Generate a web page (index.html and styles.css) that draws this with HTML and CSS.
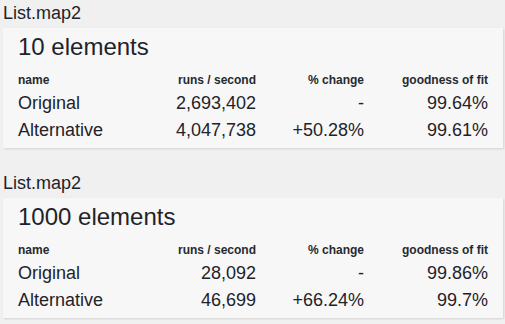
FILE: index.html
```html
<!DOCTYPE html>
<html>
<head>
<meta charset="utf-8">
<link rel="stylesheet" href="styles.css">
</head>
<body>
<section class="bench">
  <h2 class="suite">List.map2</h2>
  <div class="card">
    <h3 class="title">10 elements</h3>
    <div class="table">
      <div class="th left">name</div>
      <div class="th">runs / second</div>
      <div class="th">% change</div>
      <div class="th">goodness of fit</div>
      <div class="td left">Original</div>
      <div class="td">2,693,402</div>
      <div class="td">-</div>
      <div class="td">99.64%</div>
      <div class="td left">Alternative</div>
      <div class="td">4,047,738</div>
      <div class="td">+50.28%</div>
      <div class="td">99.61%</div>
    </div>
  </div>
</section>
<section class="bench">
  <h2 class="suite">List.map2</h2>
  <div class="card">
    <h3 class="title">1000 elements</h3>
    <div class="table">
      <div class="th left">name</div>
      <div class="th">runs / second</div>
      <div class="th">% change</div>
      <div class="th">goodness of fit</div>
      <div class="td left">Original</div>
      <div class="td">28,092</div>
      <div class="td">-</div>
      <div class="td">99.86%</div>
      <div class="td left">Alternative</div>
      <div class="td">46,699</div>
      <div class="td">+66.24%</div>
      <div class="td">99.7%</div>
    </div>
  </div>
</section>
</body>
</html>
```
FILE: styles.css
```css
html, body {
  margin: 0;
  background: #f0f0f0;
}
body {
  padding: 0 2px 0 3px;
  font-family: "Liberation Sans", Arial, sans-serif;
  color: #1f2329;
}
.bench {
  margin-bottom: 22px;
}
.suite {
  margin: 0 0 3px;
  padding-top: 1px;
  font-size: 18px;
  line-height: 24px;
  font-weight: normal;
}
.card {
  background: #f7f7f7;
  box-shadow: 1px 1px 2px rgba(0, 0, 0, 0.12);
  padding: 4px 15px 5px;
  height: 111px;
}
.title {
  margin: 0 0 8px;
  font-size: 24px;
  line-height: 30px;
  font-weight: normal;
}
.table {
  display: grid;
  grid-template-columns: 1fr 130px 108px 124px;
}
.th {
  font-size: 12px;
  line-height: 20px;
  font-weight: bold;
  text-align: right;
  color: #262a30;
}
.td {
  font-size: 18px;
  line-height: 27px;
  text-align: right;
}
.left {
  text-align: left;
}
```
